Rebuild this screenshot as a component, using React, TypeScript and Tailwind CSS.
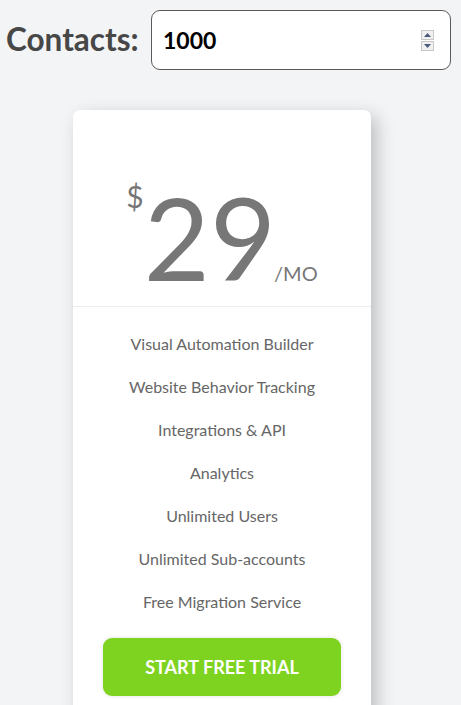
const features = [
  'Visual Automation Builder',
  'Website Behavior Tracking',
  'Integrations & API',
  'Analytics',
  'Unlimited Users',
  'Unlimited Sub-accounts',
  'Free Migration Service',
]

function Spinner() {
  return (
    <div className="flex flex-col gap-[1px]">
      <div className="flex h-[10px] w-[13px] items-center justify-center border border-[#c8c8c8] bg-[#f0f0f0]">
        <svg width="7" height="4" viewBox="0 0 7 4">
          <path d="M0 4 L3.5 0 L7 4 Z" fill="#4a5a7a" />
        </svg>
      </div>
      <div className="flex h-[10px] w-[13px] items-center justify-center border border-[#c8c8c8] bg-[#f0f0f0]">
        <svg width="7" height="4" viewBox="0 0 7 4">
          <path d="M0 0 L3.5 4 L7 0 Z" fill="#4a5a7a" />
        </svg>
      </div>
    </div>
  )
}

export default function App() {
  return (
    <div className="min-h-screen bg-[#f3f4f6] font-['Lato',sans-serif]">
      <div className="flex items-center pl-[6px] pr-[10px] pt-[10px]">
        <label className="text-[31.5px] font-bold leading-none text-[#474747]">Contacts:</label>
        <div className="ml-auto flex h-[60px] w-[300px] items-center rounded-[9px] border border-[#5a5a5a] bg-white pl-[11px] pr-[16px]">
          <span className="flex-1 text-[23px] font-bold text-black">1000</span>
          <Spinner />
        </div>
      </div>

      <div className="ml-[73px] mt-[40px] w-[298px] rounded-[7px] bg-white pb-10 shadow-[6px_6px_18px_rgba(0,0,0,0.22)]">
        <div className="flex justify-center pt-[70px] pb-[12px] text-[#777777]">
          <span className="mt-[1px] self-start text-[30px] leading-none">$</span>
          <div className="flex items-baseline">
            <span className="text-[114px] leading-none">29</span>
            <span className="-ml-[2px] text-[20px] leading-none">/MO</span>
          </div>
        </div>
        <div className="h-px bg-[#ececec]" />
        <ul className="pt-[15px] text-center text-[16px] text-[#666666]">
          {features.map((f) => (
            <li key={f} className="leading-[43px]">
              {f}
            </li>
          ))}
        </ul>
        <div className="mt-[15px] flex justify-center">
          <button
            type="button"
            className="h-[58px] w-[238px] rounded-[9px] bg-[#7ed321] text-[18px] font-bold text-white shadow-[0_0_4px_rgba(0,0,0,0.12)]"
          >
            START FREE TRIAL
          </button>
        </div>
      </div>
    </div>
  )
}
